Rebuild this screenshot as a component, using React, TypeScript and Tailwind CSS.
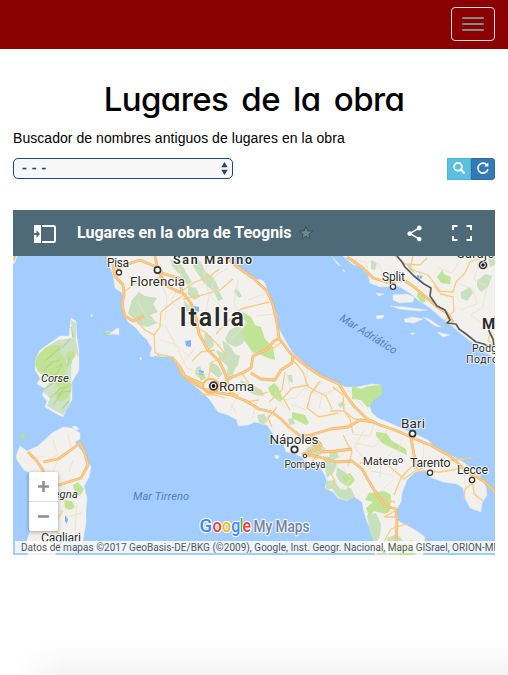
import React from "react";
import { MdShare } from "react-icons/md";

const forests = [
  "M139 292l6 4 12 2-4 6 5 8-8 3 7 8-10 4-9-3-5-6-5-4 5-7-2-6z",
  "M131 303l9-5 8 3-4 9-9 5-7-2z",
  "M170 259l8 3 6 6 3 7-9-2-6-7z",
  "M195 257l6 5 4 9 9 7 5 11-6 2-9-8-6-9-5-8z",
  "M180 272l7 2 5 8-4 3-7-5z",
  "M188 286l8 2 4 9-6 3-6-6z",
  "M213 290l6 1 4 8-5 2z",
  "M236 288l3 3 3 5-3 2-5-6z",
  "M184 300l6 7 2 6-7-2z",
  "M229 331l7-5 8 3 3 8-5 7-6 3-9-4-2-4z",
  "M205 332l6 4 3 9-4 4-6-8z",
  "M216 350l10 4 6 8-3 5-9-7z",
  "M210 362l7 3 6 9-5 4-9-8z",
  "M222 340l8 6 6 10-3 6-8-8z",
  "M232 353l8 3-2 9-6 8-5-7z",
  "M228 366l7 2-3 12-6-3z",
  "M240 380l12 5 10 5 2 6-9-1-11-6z",
  "M196 368l4-2 3 8-4 4-4-4z",
  "M257 415l7-1 4 6-4 5-5-3z",
  "M288 419l5-1 2 6-5 1z",
  "M287 375l2 6 4 2-1-8z",
  "M308 447l11-3 7 5-5 6-12 1-4-4z",
  "M323 456l7 1 7 8-4 8-6 5-2-9z",
  "M326 481l8-1 6 9 9 1 6 6-9 5-8-4-6-9-6 3z",
  "M337 467l8 5 6 9-3 6-8-5-4-7z",
  "M330 451l6-1 3 7-6 3-4-3z",
  "M347 487l4 1 4 9-4 2-6-5z",
  "M367 515l9-2 5 11-1 12-4 9-6-12z",
  "M387 538l10-4 7 8 8-2 7 7-4 8h-26z",
  "M377 549l6-2 5 8h-11z",
  "M338 404l5-3 2 4-5 3z",
  "M406 263l5 3 4 7-5-2z",
  "M371 260l6 3-2 7-4-1z",
  "M461 292l9-5 3 6-6 8-6-3z",
  "M477 281l8-7 7 2-4 11-7 5-4-5z",
  "M488 258l7-1v8l-5 2z",
];
const parks = [
  "M246 322l15 5 4 12-4 13-8 1-9-13-3-8z",
  "M254 341l8-5 11 11 2 13-7-2-11-5z",
  "M268 388l6-5 4 4 5 12-3 3-9-7z",
  "M292 412l13 3 4 8-3 2-14-7z",
  "M352 386l9 3 7-3 13-1 1 9-9 7-5 7-7-8-9-1z",
  "M376 432l10 1 6 8 14 8 1 6-13-6-12-6-6-7z",
  "M369 493l15-2 7 4-1 16-5 3-11-3-5 6-3-9 7-6-8-2z",
  "M437 277l5-7 2 4 7 3-1 7-9-1z",
  "M418 291l6 3 2 7-4 2-5-6z",
  "M198 374l6-1 2 5-5 3z",
  "M73 485l5-3 6 7-4 7-6-6z",
  "M64 500l8 1 3 6-5 3-5-2z",
  "M342 476l8-3 5 7-5 6-5-2z",
  "M397 548l8-5 9 7-3 5h-10z",
  "M243 312l8 5 4 8-5 2-7-8z",
];
const motorways = [
  "M106 256l7 8 2 12 8 9 1 9-2 11 3 11 8 5 11-5",
  "M116 269l9-4 15-5 14 6 10 8 15 4 3 14 8 10 5 10 4 22 9 16 11 11 6 12 5 19 8 5",
  "M155 256l3 14 7 15 16 8",
  "M172 357l8 10 5 9 18 8",
  "M216 392l-12-3-14-8-8-7-4-10",
  "M215 392l16 3 15 6 13 8 13 3 9 7 9 9 9 7 11 7 13 10 13-1 16-2",
  "M224 256l12 10 17 12 14 13 6 14 4 18 2 15 11 15 16 13 15 10 18 8 6 10 9 12 13 13 13 6 15 5 18 8 17 7 20 11 14 13 21 13 12 12",
  "M222 386l8-8 12-5 9-5 2-12 13-6 8-9 6-3",
  "M251 373l10 6 14 1 6-10 11-7 1-9",
  "M297 438l8-3 9 2 7 8-6 5-12 4 16 3 17 5 16-1 10 8 8 14 8 13 7 10 11 3 1 11-1 30",
  "M307 436l24-7 17-2 12-7 14 2",
  "M410 432l2 12 3 16 1 9",
  "M347 257l16 11 10 10 14 4 17-2 10 7 12 10 10 9 11 7 6 9",
  "M28 452l8 8 7 10 2 16 5 8",
  "M43 462l15-3 10-7 12-9 5 11 3 11-7 13-19 6-13 3",
];
const roads = [
  "M124 292l9-7 11-4 19-4M137 321l8 9 9 5 6-8 1-15 12-10 14-9",
  "M154 335l1 17 4 4",
  "M157 354l15 3",
  "M180 292l15-10 14-5 10-8M183 299l20-4 17-5 13-11",
  "M190 324l15 8 13 13 9 11M192 361l9-9 14-2",
  "M216 334l10-11 15-14 28-7M242 373l8 12 11 9 7-2",
  "M245 402l14-2M225 398l-10-3-15-1M224 357l-12 5-4 18",
  "M320 381l-9 12-4 15 12 9 19-4M283 341l-9 7-8-1",
  "M293 360l10 12 5 15 18 9 6 13M285 372l-3 18-13 12M309 385l-17 3-9 10 7 12",
  "M330 411h14l6 8 3 14",
  "M373 421l-19-2-10-8-1-16-10-8",
  "M360 463l24-1 11 9 9 8 11-8 25-9 31-4M415 464l-6 5-8 9-7 17M418 471l22 1 23-4 9 8 2 18 9 7M463 468l12 13-10 8-1 10",
  "M385 500l10 2M395 511l-11 6M385 517h10M409 523l-18 6-8 14",
  "M395 256l10 8 15 1 7-7M413 256l-3 13 18 6 12 16 13 1 3-10 9-9 5-11 15-6",
  "M434 286l7 8 12 3 1 14-10 10",
  "M30 505l15 7 4 13 10 9M63 511l-12 17 13 9",
  "M330 472l5 9-3 8M348 466l4-14-9-17",
  "M310 464l8-10 3-12M277 407l-9 11 4 9",
  "M491 332l-3 8 7 8",
];
const minor = [
  "M128 275l14 10 18-3 7 15-2 23M137 300l9 17 20 10 9 17M178 265l5 15-12 21 16 15",
  "M209 258l-5 17 5 20-4 22M228 268l-13 8-5 20 17 15M238 280l-4 24 13 20-16 15",
  "M248 300l18-7M256 316l18-2M160 340l14 4 16 13M195 348l-11 14M178 350l9 18 20 7",
  "M220 372l18 6 12-8M230 402l7 12M240 390l-9 18M257 402l-5 17M271 408l-7 17",
  "M285 400l12-3 7-9 13 6M290 388l-3-14M319 409l3-15 17-6M291 404l15 6 5-7M275 392l9 16",
  "M308 368l-3 20M322 382l-14 16M336 388l-13 9M348 390l15 17M347 401l9 9",
  "M375 421l-5 15-17-2M387 430l-13 17-18-4M393 451l-11 12M402 438l-4 14 9 13M355 447l11 16M364 430l-10 18M381 463l-1 14M371 471l20 4 8-11M393 480l-9 8M345 452l-14 12",
  "M432 462l8-6M453 464l9-6M463 469l3 18M471 477l7 26M447 453l-10 11M424 441l-1 25",
  "M315 445l14 7 14-1M326 459l-9 6M340 491l11-12-9-13M362 478l10-13",
  "M350 259l16 3 4 18M378 263l10 20M421 270l-3 14 9 8M456 282l17 8 4 14-17 6M461 259l-9 14-14-5M480 260l-6 19 12 7M486 289l-3 18-12 8 13 10",
  "M53 440l5 15-16 7M68 434l3 15M30 459l15-3M58 459l-6 15M73 460l-4 12M52 480l18 12-7 15M82 513l-16 4M77 503l-2 31M51 515l17-7",
];

type Label = { t: string; x: number; y: number; s: number; w: number; b?: number; i?: boolean };
const labels: Label[] = [
  { t: "Pisa", x: 107, y: 267, s: 12, w: 22 },
  { t: "Florencia", x: 130, y: 286, s: 13.3, w: 55 },
  { t: "Split", x: 382, y: 281, s: 12.3, w: 23 },
  { t: "Sarajevo", x: 457, y: 258, s: 12.5, w: 51 },
  { t: "Podgorica", x: 472, y: 352, s: 10.5, w: 50 },
  { t: "Подгорица", x: 466, y: 363, s: 10.5, w: 58 },
  { t: "Corse", x: 41, y: 382, s: 11.5, w: 28, i: true },
  { t: "Roma", x: 219, y: 391, s: 13.5, w: 35 },
  { t: "Nápoles", x: 269.5, y: 444, s: 13.5, w: 49 },
  { t: "Pompeya", x: 284.5, y: 467.5, s: 10.3, w: 41 },
  { t: "Bari", x: 401, y: 428, s: 13.5, w: 24 },
  { t: "Matera", x: 363, y: 465, s: 11.3, w: 35 },
  { t: "Tarento", x: 410, y: 467, s: 12.3, w: 40.5 },
  { t: "Lecce", x: 457, y: 474, s: 12.3, w: 31 },
  { t: "Cagliari", x: 41, y: 541.5, s: 12.3, w: 40 },
  { t: "Sardegna", x: 31, y: 498, s: 11.3, w: 47, i: true },
  { t: "San Marino", x: 173, y: 263.5, s: 12.5, w: 79, b: 600 },
  { t: "Italia", x: 179.5, y: 326, s: 25, w: 64.5, b: 600 },
  { t: "M", x: 482, y: 329, s: 15, w: 12, b: 700 },
];

const google = [
  ["G", 199.5, "#4285f4", 12.5],
  ["o", 212.5, "#ea4335", 9.3],
  ["o", 222, "#fbbc05", 9.3],
  ["g", 231.2, "#4285f4", 9],
  ["l", 240, "#34a853", 3],
  ["e", 242.5, "#ea4335", 8.5],
] as const;

function MapDrawing() {
  return (
    <svg viewBox="13 256 482 299" className="block h-full w-full font-['Roboto',sans-serif]">
      <rect x="13" y="256" width="482" height="299" fill="#a3ccff" />
      <g fill="#f2f1ee" stroke="#e4eaf0" strokeWidth=".5">
        <path d="M106 256L110 267 113 275 115 288 122 293 124 303 124 313 128 322 135 327 140 333 147 340 152 348 150 354 157 356 172 357 178 365 182 375 190 382 202 392 210 400 218 412 228 415 237 420 238 426 248 425 255 422 267 425 275 437 277 442 284 444 286 452 293 453 302 457 307 466 318 465 323 472 327 480 325 488 333 492 338 498 347 501 353 496 362 502 364 512 367 522 372 533 375 545 375 555 423 555 425 537 418 532 410 527 400 522 395 517 396 510 401 502 402 493 407 480 415 472 425 470 430 477 443 482 457 484 463 488 465 498 470 508 481 512 482 503 487 495 486 487 478 473 463 462 447 453 435 448 428 440 415 434 410 432 390 423 378 418 372 413 369 405 372 400 380 393 381 385 372 384 357 387 345 387 338 383 328 380 313 372 303 362 292 352 285 340 278 327 277 315 272 303 267 290 265 283 262 280 252 279 240 268 228 260 223 256z" />
        <path d="M343 256L352 264 360 267 368 275 370 283 380 287 398 286 410 293 418 300 430 308 443 319 452 326 460 333 470 341 479 346 485 352 495 358V256z" />
        <path d="M52 433L63 427 71 428 80 433 80 439 75 442 83 453 91 467 89 477 84 486 87 498 86 510 86 523 83 541 75 542 68 537 60 545 55 555H28L27 540 30 532V473L24 470 17 460 16 456 20 446 27 451 38 446z" />
        <path d="M71 318L76 321 77 338 79 350 79 370 72 382 72 400 68 406 63 417 55 413 45 407 47 401 42 395 45 388 37 384 40 378 35 370 36 358 40 350 53 341 60 336 69 336 70 327z" />
        <path d="M106 331l6 1 4-3 3-1v7l-6-1-4 1zM150 354l5-1-1 4-4-1zM275 455l4 1-1 3-3-1zM140 357l2 2-2 1zM91 314l2 2-2 1zM72 427l4-1 3 3-4 2zM332 257l9 9-4-2zM343 269l2 3-2-1zM376 316l8-1-1 3-6 1zM393 295l14-1 7 3-1 5-13 1-7-3zM391 306l14 1 22 3-8 1-20-2zM404 319l9-2 10 2-9 4-9-1zM423 317l6 2 12 8-6-1zM437 332l13 3-7 2zM410 333l5 0-3 2z" />
        <path d="M13 256h4l-2 6-2 2zM376 293l8 1-5 2z" />
      </g>
      <path d="M71 320l5 3v17l3 16-7 4-1 21-1 24-7 10-16-9 3-8-7-6 6-10-11-1 5-7-5-7 2-12 5-7 13-8 14-2z" fill="#cde1c5" />
      <path d="M37 356l8-8 8-3 8 0-1 8 5 5 2 10-3 8 3 4 5 4-1 8-5 7-6 3-5-5 3-9-4-7-8-2-8-8-3-6z M68 351l6 1v9l-5 4-3-9z" fill="#c3e293" />
      <g fill="none" stroke="#a9c89a" strokeWidth="1.2" opacity=".65">
        <path d="M45 361l9-8 6-5M43 371l9-9 8-2M54 378l8-13M50 398l11-10 8-2M53 405l10-13 8-1M62 348l8-9M71 327l2 10M62 409l7-8M43 390l10-7M67 367l3-10M56 368l6-4M58 396l7-9" />
      </g>
      <path d="M72 361l5-8 2 10-3 12-5 5zM40 379l5-1-2 5-5 1z" fill="#eff0e9" />
      <path d="M106 332l4-1 1 3-4 1zM20 436l3-3 2 2-1 3-3 1z" fill="#b8e092" />
      <g fill="#c9e0be">{forests.map((d) => <path key={d} d={d} />)}</g>
      <g fill="#c0e495">{parks.map((d) => <path key={d} d={d} />)}</g>
      <path d="M185 341l6-1v7l-5-1zM194 306l5 1v5l-5-2zM199 370l5 1-1 4-4-1zM417 275l6 1-2 3-4-1zM65 515l3 4-1 5-2-3z" fill="#82b5f8" />
      <g fill="none" stroke="#eddfc5" strokeWidth=".8">{minor.map((d) => <path key={d} d={d} />)}</g>
      <g fill="none" stroke="#f9cc82" strokeWidth="1.3" strokeLinejoin="round">{roads.map((d) => <path key={d} d={d} />)}</g>
      <g fill="none" stroke="#f0b566" strokeWidth="2.8" strokeLinejoin="round">{motorways.map((d) => <path key={d} d={d} />)}</g>
      <g fill="none" stroke="#fccb8b" strokeWidth="1.6" strokeLinejoin="round">{motorways.map((d) => <path key={d} d={d} />)}</g>
      <path d="M14 256h2l-1 4-2 1z" fill="#f3bd73" />
      <ellipse cx="211" cy="386" rx="8" ry="7" fill="none" stroke="#f6bc6c" strokeWidth="2" />
      <path d="M397 256l5 6 3 5 9 9 10 8 7 4-1 8 7 10 8 4 5 10-3 3 9 1 3 5 7 5 10 8 8 2 5 3 5-1-1-7-4-8 2-12 8-3v-10" fill="none" stroke="#5b5c5e" strokeWidth="1.7" strokeLinejoin="round" />

      <g fill="#fff" stroke="#333" strokeWidth="1.3">
        <circle cx="119" cy="272.5" r="2.5" />
        <circle cx="157.5" cy="270" r="3.1" strokeWidth="1.6" />
        <circle cx="393" cy="286.8" r="2.6" />
        <circle cx="412.5" cy="433.7" r="3" strokeWidth="1.7" />
        <circle cx="294.5" cy="449.5" r="3.2" strokeWidth="1.8" />
        <circle cx="305" cy="456" r="1.8" strokeWidth="1" />
        <circle cx="400.5" cy="460.5" r="2" strokeWidth="1" />
        <circle cx="430" cy="472.8" r="2.6" />
        <circle cx="472" cy="480" r="2.6" />
        <circle cx="213.5" cy="386" r="3.8" strokeWidth="1.8" />
        <circle cx="483" cy="265" r="3.5" strokeWidth="1.7" />
      </g>
      <circle cx="213.5" cy="386" r="1.9" fill="#111" />
      <circle cx="483" cy="265" r="1.7" fill="#111" />

      {labels.map((l) => (
        <text
          key={l.t}
          x={l.x}
          y={l.y}
          fontSize={l.s}
          fontWeight={l.b ?? 400}
          fontStyle={l.i ? "italic" : "normal"}
          textLength={l.w}
          fill="#2b2b2b"
          stroke="#fff"
          strokeOpacity=".75"
          strokeWidth="2.2"
          strokeLinejoin="round"
          paintOrder="stroke"
        >
          {l.t}
        </text>
      ))}
      <g fill="#5280c4" fontStyle="italic" fontSize="11">
        <text x="133" y="500" textLength="56">Mar Tirreno</text>
        <text x="339" y="320" textLength="65" transform="rotate(32 339 320)">Mar Adriático</text>
      </g>
      <g stroke="#fff" strokeOpacity=".85" strokeWidth="2.4" strokeLinejoin="round" paintOrder="stroke">
        {google.map(([ch, x, color, w], n) => (
          <text key={n} x={x} y="531.5" fontSize="17.5" fontWeight="500" fill={color} textLength={w} lengthAdjust="spacingAndGlyphs">{ch}</text>
        ))}
        <text x="253.500" y="531.5" fontSize="16" fontWeight="500" fill="#73859f" textLength="56" lengthAdjust="spacingAndGlyphs">My Maps</text>
      </g>
    </svg>
  );
}

function MapHeader() {
  return (
    <div className="flex h-[46px] items-center bg-[#4e6a78] pr-[23px] pl-[21px] text-white">
      <svg viewBox="0 0 22 18" className="mt-px h-[18px] w-[22px] shrink-0">
        <path d="M2 0H7V18H2Q0 18 0 16V11H2V14L6 9 2 4.500V7H0V2Q0 0 2 0z" fill="white" />
        <path d="M0 0H7V18H0z" fill="white" />
        <path d="M0 8H2.500V5L6 9 2.500 13V10H0z" fill="#4e6a78" />
        <path d="M8 1h11.500q1.500 0 1.500 1.500v13q0 1.500-1.500 1.500H8" fill="none" stroke="white" strokeWidth="2" />
      </svg>
      <span className="ml-[21px] w-[215px] shrink-0 font-['Roboto',sans-serif] text-[16px] font-bold tracking-[-0.01px] whitespace-nowrap">
        Lugares en la obra de Teognis
      </span>
      <svg viewBox="0 0 16 16" className="ml-[6px] h-[16px] w-[16px]">
        <path d="M8 1.200L9.800 6H14.800L10.900 9.200 12.300 14.200 8 11.300 3.700 14.200 5.100 9.200 1.200 6H6.200z" fill="#71858f" stroke="#3c5563" strokeWidth="1" />
      </svg>
      <MdShare className="ml-auto size-[19px]" />
      <svg viewBox="0 0 20 16" className="ml-[28px] h-[16px] w-[20px]" fill="none" stroke="white" strokeWidth="2">
        <path d="M1 5V1H5.500M14.500 1H19V5M19 11V15H14.500M5.500 15H1V11" />
      </svg>
    </div>
  );
}

export default function App() {
  return (
    <div className="flex h-[675px] w-[508px] flex-col overflow-hidden bg-white font-['Liberation_Sans',sans-serif] text-black">
      <nav className="flex h-[49px] shrink-0 items-start justify-end bg-[#8b0000] pt-[7px] pr-[13px]">
        <button className="flex h-[34px] w-[44px] flex-col items-center justify-center gap-1 rounded-[4px] border border-[#ddd]">
          <span className="h-[2px] w-[22px] rounded-[1px] bg-[#888]" />
          <span className="h-[2px] w-[22px] rounded-[1px] bg-[#888]" />
          <span className="h-[2px] w-[22px] rounded-[1px] bg-[#888]" />
        </button>
      </nav>
      <main className="flex flex-col px-[13px] pt-[29px]">
        <h1 className="h-[50px] text-center font-['Inter',sans-serif] text-[33px] leading-[42px] font-medium tracking-[-0.6px] [word-spacing:5px] whitespace-nowrap [font-feature-settings:'cv11']">
          Lugares de la obra
        </h1>
        <p className="h-[30px] text-[14px] leading-[20px] tracking-[0.05px]">Buscador de nombres antiguos de lugares en la obra</p>
        <div className="flex h-[22px] items-start justify-between">
          <button className="flex h-[21px] w-[220px] items-center justify-between rounded-[5px] border border-[#0d4a86] bg-[#f7f7f7] pr-[4px] pl-[8px] text-[14px] text-[#2b426f]">
            <span className="tracking-[0.6px] [-webkit-text-stroke:0.3px]">- - -</span>
            <svg viewBox="0 0 7 13" className="h-[13px] w-[7px]" fill="#2b426f">
              <path d="M3.500 0L6.700 5.200H.3zM3.500 13L6.700 7.800H.3z" />
            </svg>
          </button>
          <div className="flex">
            <button className="flex h-[22px] w-[24px] items-center justify-center border border-[#46b8da] bg-[#5bc0de] pb-[2px]">
              <svg viewBox="0 0 12 12" className="h-[12px] w-[12px]" fill="none" stroke="white">
                <circle cx="5" cy="4.800" r="3.900" strokeWidth="1.700" />
                <path d="M7.900 7.700L11 10.800" strokeWidth="2.200" strokeLinecap="round" />
              </svg>
            </button>
            <button className="flex h-[22px] w-[24px] items-center justify-center rounded-r-[3px] border border-[#2e6da4] bg-[#337ab7] pb-[2px]">
              <svg viewBox="0 0 12 12" className="h-[12px] w-[12px]">
                <path d="M9.600 2.600A5 5 0 1 0 10.900 7.200" fill="none" stroke="white" strokeWidth="1.600" />
                <path d="M11.400 .4V4.600H7.200z" fill="white" />
              </svg>
            </button>
          </div>
        </div>
        <section className="mt-[30px] flex h-[345px] w-[482px] flex-col overflow-hidden">
          <MapHeader />
          <div className="relative h-[299px]">
            <MapDrawing />
            <div className="absolute top-[216px] left-[16px] flex h-[59px] w-[29px] flex-col rounded-[2px] bg-white text-[#929292] shadow-[0_1px_4px_rgba(0,0,0,0.35)]">
              <button className="flex h-[30px] items-center justify-center border-b border-[#ddd]">
                <svg viewBox="0 0 11 11" className="size-[11px]"><path d="M5.500 0V11M0 5.500H11" stroke="currentColor" strokeWidth="2.600" /></svg>
              </button>
              <button className="flex h-[29px] items-center justify-center">
                <svg viewBox="0 0 11 3" className="h-[3px] w-[11px]"><path d="M0 1.500H11" stroke="currentColor" strokeWidth="2.600" /></svg>
              </button>
            </div>
            <div className="absolute top-[285px] right-0 left-[2px] h-[12px] overflow-hidden bg-white/80 pl-[6px] font-['Roboto',sans-serif] text-[10px] leading-[13px] tracking-[0.02px] whitespace-nowrap text-[#555]">
              Datos de mapas ©2017 GeoBasis-DE/BKG (©2009), Google, Inst. Geogr. Nacional, Mapa GISrael, ORION-ME
            </div>
          </div>
        </section>
      </main>
      <div className="mt-auto h-[32px] shrink-0 bg-linear-to-b from-white to-[#f3f3f3] [mask-image:linear-gradient(to_right,transparent_15px,black_65px)]" />
    </div>
  );
}
